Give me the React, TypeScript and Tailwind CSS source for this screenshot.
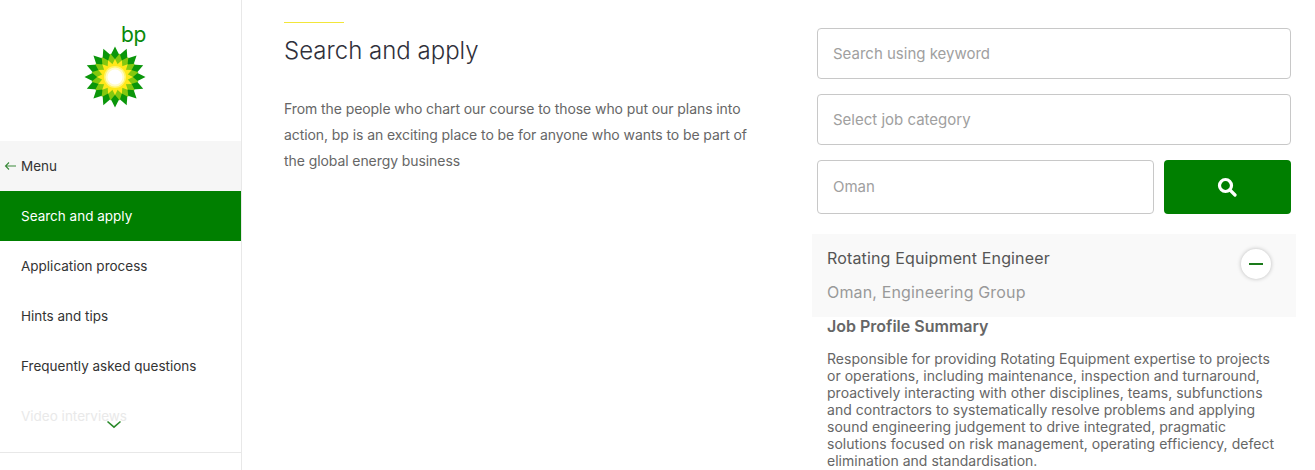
import React from "react";

const outer = Array.from({ length: 16 }, (_, i) => i * 22.5);

function Logo() {
  return (
    <svg width="62" height="62" viewBox="-31 -31 62 62">
      {outer.map((a) => (
        <path key={`o${a}`} d="M-4.8 -21 L0 -30.5 L4.8 -21 L0 -13 Z" fill="#0a960a" transform={`rotate(${a})`} />
      ))}
      {outer.map((a) => (
        <path key={`m${a}`} d="M-4 -16.5 L0 -24 L4 -16.5 L0 -8 Z" fill="#84c80f" transform={`rotate(${a + 11.25})`} />
      ))}
      {outer.map((a) => (
        <path key={`y${a}`} d="M-3 -12 L0 -18 L3 -12 L0 -5 Z" fill="#ffe81a" transform={`rotate(${a})`} />
      ))}
      <circle r="11" fill="#fff46e" />
      <circle r="9.5" fill="#fffbc8" />
      <circle r="7.5" fill="#ffffff" />
    </svg>
  );
}

const items = ["Application process", "Hints and tips", "Frequently asked questions"];

function Field({ label, className }: { label: string; className: string }) {
  return (
    <div className={`flex items-center rounded-[4px] border border-[#c8c8c8] bg-white pl-[15px] text-[15px] text-[#a0a0a0] ${className}`}>
      {label}
    </div>
  );
}

export default function App() {
  return (
    <div className="flex h-[470px] w-[1315px] overflow-hidden bg-white font-['Inter',sans-serif]">
      <aside className="flex h-full w-[242px] shrink-0 flex-col border-r border-[#e8e8e8]">
        <div className="flex h-[141px] shrink-0 flex-col items-center pr-[12px]">
          <div className="mt-[24px] ml-[38px] h-[22px] text-[21px] leading-[21px] tracking-[-0.3px] text-[#0a8a0a]">bp</div>
          <div className="flex justify-center">
            <Logo />
          </div>
        </div>
        <div className="flex h-[50px] shrink-0 items-center bg-[#f6f6f6] pl-[4px] text-[13.5px] text-[#333]">
          <svg width="13" height="10" viewBox="0 0 13 10" className="mr-[4px]" fill="none" stroke="#3a8a3a" strokeWidth="1.1">
            <path d="M12 5H1.5M5 1.5L1.5 5L5 8.5" />
          </svg>
          Menu
        </div>
        <div className="flex h-[50px] shrink-0 items-center bg-[#007f00] pl-[21px] text-[13.5px] text-white">Search and apply</div>
        {items.map((t) => (
          <div key={t} className="flex h-[50px] shrink-0 items-center pl-[21px] text-[13.5px] text-[#333]">
            {t}
          </div>
        ))}
        <div className="relative flex h-[50px] shrink-0 items-center pl-[21px] text-[13.5px] text-[#e9e9e9]">
          Video interviews
          <svg width="16" height="9" viewBox="0 0 16 9" className="absolute left-[106px] top-[29px]" fill="none" stroke="#2a8a2a" strokeWidth="1.6">
            <path d="M1.5 1.5L8 7.2L14.5 1.5" />
          </svg>
        </div>
        <div className="mt-[11px] border-t border-[#e8e8e8]" />
      </aside>

      <main className="flex min-w-0 flex-1 pl-[42px]">
        <section className="w-[528px] shrink-0">
          <div className="mt-[22px] h-px w-[60px] bg-[#f2e63a]" />
          <h1 className="mt-[13px] text-[24px] font-light leading-[30px] text-[#30303a]">Search and apply</h1>
          <p className="mt-[30px] w-[480px] text-[14px] leading-[26px] tracking-[-0.08px] text-[#666]">
            From the people who chart our course to those who put our plans into action, bp is an exciting place to be for anyone who wants to be part of the global energy business
          </p>
        </section>

        <section className="w-[484px] shrink-0 pt-[28px]">
          <div className="flex flex-col gap-[15px] px-[5px]">
            <Field label="Search using keyword" className="h-[51px] pt-[1px]" />
            <Field label="Select job category" className="h-[51px] pt-[1px]" />
            <div className="flex gap-[10px]">
              <Field label="Oman" className="h-[54px] flex-1" />
              <button className="flex h-[54px] w-[127px] items-center justify-center rounded-[4px] bg-[#007f00] pr-[2px]">
                <svg width="20" height="20" viewBox="0 0 20 20" fill="none" stroke="#fff" strokeWidth="3.2">
                  <circle cx="8.5" cy="8.5" r="6" />
                  <path d="M13 13L18 18" strokeLinecap="round" />
                </svg>
              </button>
            </div>
          </div>
          <div className="mt-[20px] flex h-[83px] items-start justify-between bg-[#f9f9f9] pl-[15px] pr-[25px]">
            <div>
              <div className="mt-[14px] text-[16px] leading-[20px] tracking-[0.15px] text-[#555]">Rotating Equipment Engineer</div>
              <div className="mt-[14px] text-[16px] leading-[20px] tracking-[0.15px] text-[#999]">Oman, Engineering Group</div>
            </div>
            <div className="mt-[15px] flex h-[30px] w-[30px] items-center justify-center rounded-full bg-white shadow-[0_0_4px_rgba(0,0,0,0.25)]">
              <div className="h-[2px] w-[14px] bg-[#1a7a1a]" />
            </div>
          </div>
          <div className="pl-[15px] pr-[20px]">
            <h2 className="text-[16px] font-semibold leading-[18px] text-[#666]">Job Profile Summary</h2>
            <p className="mt-[15px] text-[14px] leading-[17px] tracking-[0.03px] text-[#666]">
              Responsible for providing Rotating Equipment expertise to projects or operations, including maintenance, inspection and turnaround, proactively interacting with other disciplines, teams, subfunctions and contractors to systematically resolve problems and applying sound engineering judgement to drive integrated, pragmatic solutions focused on risk management, operating efficiency, defect elimination and standardisation.
            </p>
          </div>
        </section>
      </main>
    </div>
  );
}
